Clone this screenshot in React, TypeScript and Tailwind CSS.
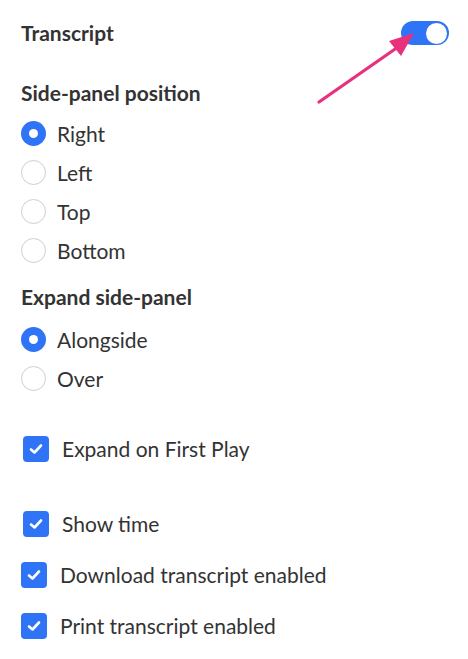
import React from "react";

const BLUE = "bg-[#2f74f6]";

function Radio({ label, checked }: { label: string; checked?: boolean }) {
  return (
    <div className="flex items-center h-[39px] gap-[11px]">
      {checked ? (
        <span className={`w-[25px] h-[25px] rounded-full ${BLUE} flex items-center justify-center`}>
          <span className="w-[9px] h-[9px] rounded-full bg-white" />
        </span>
      ) : (
        <span className="w-[25px] h-[25px] rounded-full border border-[#cfcfcf] bg-white" />
      )}
      <span className="text-[21px] text-[#333]">{label}</span>
    </div>
  );
}

function Check({ label, wide }: { label: string; wide?: boolean }) {
  return (
    <div className={`flex items-center h-[51px] ${wide ? "pl-[2px] gap-[13px]" : "gap-[13px]"}`}>
      <span className={`w-[26px] h-[26px] rounded-[4px] ${BLUE} flex items-center justify-center`}>
        <svg width="14" height="12" viewBox="0 0 14 12" fill="none">
          <path d="M2 6.5 L5.5 9.5 L12 2.5" stroke="white" strokeWidth="2.6" strokeLinecap="round" strokeLinejoin="round" />
        </svg>
      </span>
      <span className="text-[21px] text-[#333]">{label}</span>
    </div>
  );
}

export default function App() {
  return (
    <div className="relative w-[468px] h-[659px] bg-white font-['Lato','Noto_Sans',sans-serif] pl-[21px] pt-[21px] overflow-hidden">
      {/* Header */}
      <div className="flex items-center justify-between h-[24px] pr-[19px]">
        <h1 className="text-[21px] font-bold text-[#333]">Transcript</h1>
        <div className={`w-[48px] h-[24px] rounded-full ${BLUE} flex items-center justify-end pr-[2px]`}>
          <span className="w-[21px] h-[21px] rounded-full bg-white" />
        </div>
      </div>

      <h2 className="mt-[34px] h-[28px] leading-[28px] text-[21px] font-bold text-[#333]">Side-panel position</h2>
      <div className="mt-[7px]">
        <Radio label="Right" checked />
        <Radio label="Left" />
        <Radio label="Top" />
        <Radio label="Bottom" />
      </div>

      <h2 className="mt-[13px] h-[28px] leading-[28px] text-[21px] font-bold text-[#333]">Expand side-panel</h2>
      <div className="mt-[9px]">
        <Radio label="Alongside" checked />
        <Radio label="Over" />
      </div>

      <div className="mt-[25px]">
        <Check label="Expand on First Play" wide />
      </div>
      <div className="mt-[24px]">
        <Check label="Show time" wide />
        <Check label="Download transcript enabled" />
        <Check label="Print transcript enabled" />
      </div>

      {/* Annotation arrow */}
      <svg className="absolute left-0 top-0 pointer-events-none" width="468" height="659">
        <line x1="319" y1="102" x2="398" y2="47" stroke="#e8317c" strokeWidth="3.2" strokeLinecap="round" />
        <polygon points="414,33 389,41 401,56" fill="#e8317c" />
      </svg>
    </div>
  );
}
